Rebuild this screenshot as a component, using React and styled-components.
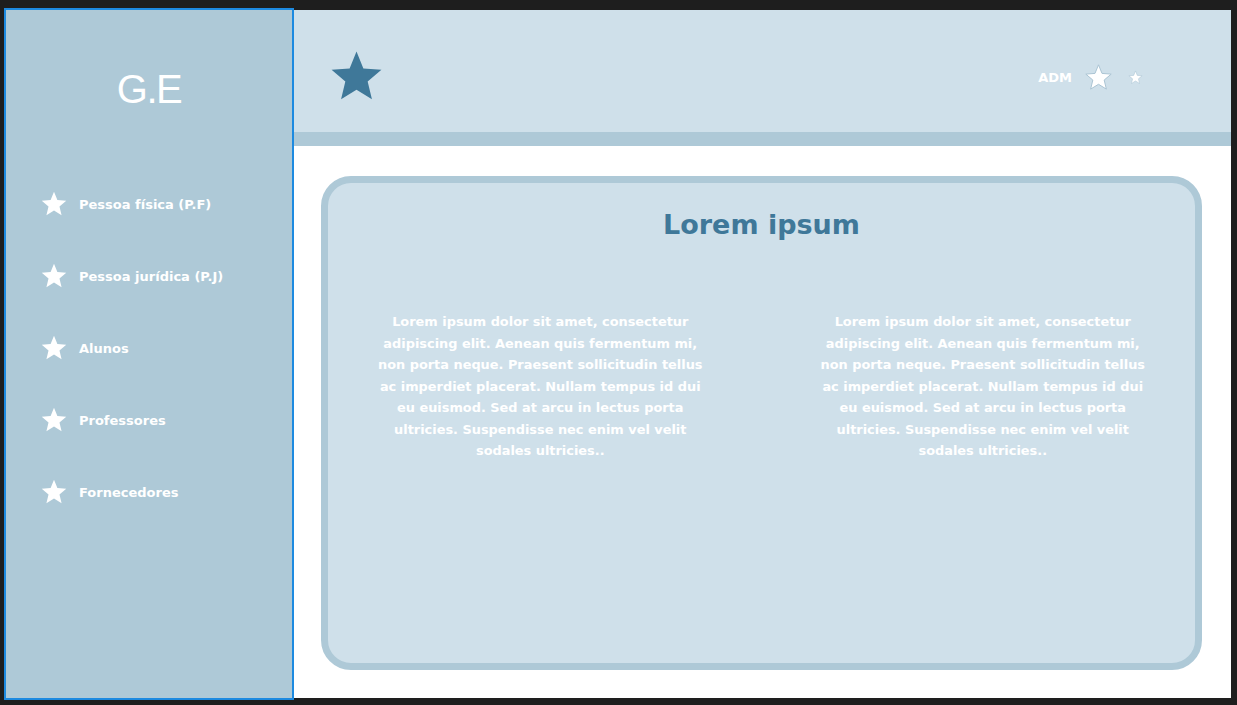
import styled, { createGlobalStyle } from 'styled-components';

const GlobalStyle = createGlobalStyle`
  html, body {
    margin: 0;
    background: #1e1e1e;
  }
  body {
    font-family: "DejaVu Sans", "Open Sans", sans-serif;
  }
`;

const navItems = [
  'Pessoa física (P.F)',
  'Pessoa jurídica (P.J)',
  'Alunos',
  'Professores',
  'Fornecedores',
];

const loremLines = [
  'Lorem ipsum dolor sit amet, consectetur',
  'adipiscing elit. Aenean quis fermentum mi,',
  'non porta neque. Praesent sollicitudin tellus',
  'ac imperdiet placerat. Nullam tempus id dui',
  'eu euismod. Sed at arcu in lectus porta',
  'ultricies. Suspendisse nec enim vel velit',
  'sodales ultricies..',
];

function Star({ size, color = '#fff', stroke }) {
  return (
    <svg width={size} height={size} viewBox="0 0 24 24">
      <polygon
        points="12,1.5 14.9,8.6 22.5,9.2 16.7,14.1 18.5,21.6 12,17.6 5.5,21.6 7.3,14.1 1.5,9.2 9.1,8.6"
        fill={color}
        stroke={stroke || 'none'}
        strokeWidth={stroke ? 0.8 : 0}
      />
    </svg>
  );
}

function Column() {
  return (
    <Paragraph>
      {loremLines.map((line, i) => (
        <span key={i}>
          {line}
          <br />
        </span>
      ))}
    </Paragraph>
  );
}

export default function App() {
  return (
    <>
      <GlobalStyle />
      <Page>
        <Frame>
          <Sidebar>
            <Logo>G.E</Logo>
            <Nav>
              {navItems.map((item) => (
                <NavItem key={item}>
                  <Star size={28} />
                  <span>{item}</span>
                </NavItem>
              ))}
            </Nav>
          </Sidebar>
          <Main>
            <Header>
              <Star size={57} color="#3f7899" />
              <UserArea>
                <Admin>ADM</Admin>
                <Star size={29} stroke="#a9c3d2" />
                <SmallStar>
                  <Star size={15} stroke="#a9c3d2" />
                </SmallStar>
              </UserArea>
            </Header>
            <Strip />
            <Content>
              <Card>
                <Title>Lorem ipsum</Title>
                <Columns>
                  <Column />
                  <Column />
                </Columns>
              </Card>
            </Content>
          </Main>
        </Frame>
      </Page>
    </>
  );
}

const Page = styled.div`
  padding: 10px 6px 7px 6px;
  height: 705px;
  box-sizing: border-box;
`;

const Frame = styled.div`
  display: grid;
  grid-template-columns: 286px 1fr;
  height: 688px;
  background: #fff;
`;

const Sidebar = styled.aside`
  background: #aec9d7;
  outline: 2px solid #1d8ae0;
  display: flex;
  flex-direction: column;
  position: relative;
  z-index: 1;
`;

const Logo = styled.div`
  height: 158px;
  display: flex;
  align-items: center;
  justify-content: center;
  color: #fff;
  font-family: "Liberation Sans", "DejaVu Sans", sans-serif;
  font-size: 40px;
  font-weight: 400;
  letter-spacing: -1.5px;
`;

const Nav = styled.nav`
  display: flex;
  flex-direction: column;
  gap: 44px;
  padding-left: 34px;
  margin-top: 22px;
`;

const NavItem = styled.div`
  display: flex;
  align-items: center;
  gap: 11px;
  height: 28px;
  color: #fff;
  font-size: 13px;
  font-weight: 700;
`;

const Main = styled.main`
  display: flex;
  flex-direction: column;
`;

const Header = styled.header`
  height: 122px;
  background: #cfe0ea;
  display: flex;
  align-items: center;
  justify-content: space-between;
  padding: 10px 88px 0 36px;
  box-sizing: border-box;
`;

const UserArea = styled.div`
  display: flex;
  align-items: center;
  gap: 12px;
  margin-top: 3px;
`;

const Admin = styled.span`
  color: #fff;
  font-size: 13px;
  font-weight: 700;
`;

const SmallStar = styled.span`
  display: flex;
  margin-left: 3px;
`;

const Strip = styled.div`
  height: 14px;
  background: #aec9d7;
`;

const Content = styled.div`
  flex: 1;
  padding: 30px 29px 28px 29px;
  display: flex;
`;

const Card = styled.section`
  flex: 1;
  background: #cfe0ea;
  border: 7px solid #aec9d7;
  border-radius: 30px;
  display: flex;
  flex-direction: column;
  align-items: center;
`;

const Title = styled.h1`
  margin: 26px 0 0 0;
  color: #3f7899;
  font-size: 27px;
  font-weight: 700;
`;

const Columns = styled.div`
  display: grid;
  grid-template-columns: 1fr 1fr;
  column-gap: 18px;
  width: 100%;
  margin-top: 71px;
`;

const Paragraph = styled.p`
  margin: 0;
  text-align: center;
  color: #fff;
  font-size: 12.9px;
  font-weight: 700;
  line-height: 21.5px;
  white-space: nowrap;
`;
